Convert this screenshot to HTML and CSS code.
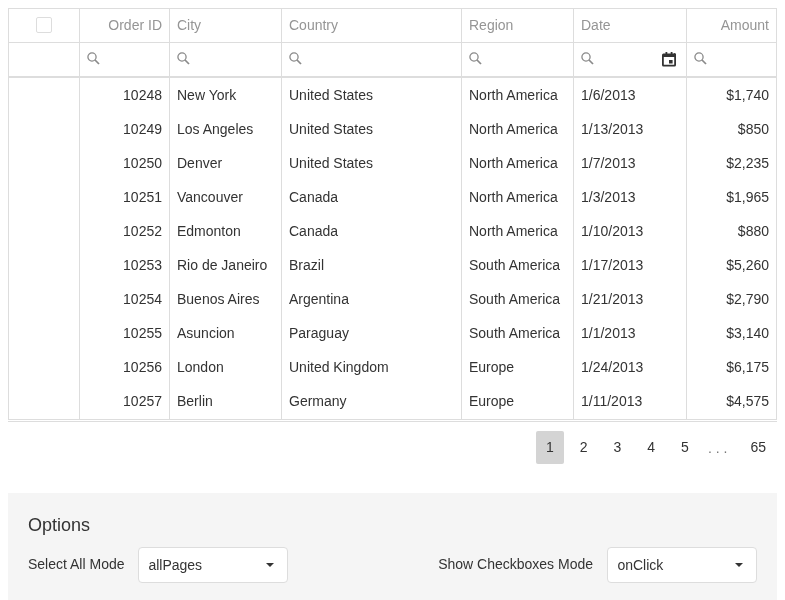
FILE: index.html
```html
<!DOCTYPE html>
<html lang="en">
<head>
  <meta charset="UTF-8" />
  <meta name="viewport" content="width=device-width, initial-scale=1.0"/>
  <title>Orders</title>
  <link rel="stylesheet" href="styles.css">
</head>
<body>

  <svg class="defs" width="0" height="0">
    <symbol id="search" viewBox="0 0 13 13">
      <circle cx="5" cy="5" r="4.100" fill="none" stroke="currentColor" stroke-width="1.300"/>
      <path d="M8 8l4 4" fill="none" stroke="currentColor" stroke-width="1.700"/>
    </symbol>
  </svg>

  <div class="grid">
    <table>
      <colgroup>
        <col class="c-check"><col class="c-id"><col class="c-city"><col class="c-country"><col class="c-region"><col class="c-date"><col class="c-amount">
      </colgroup>
      <thead>
        <tr class="head">
          <th class="check"><span class="checkbox"></span></th>
          <th class="num">Order ID</th>
          <th>City</th>
          <th>Country</th>
          <th>Region</th>
          <th>Date</th>
          <th class="num">Amount</th>
        </tr>
        <tr class="filter">
          <td></td>
          <td><svg class="search"><use href="#search"/></svg></td>
          <td><svg class="search"><use href="#search"/></svg></td>
          <td><svg class="search"><use href="#search"/></svg></td>
          <td><svg class="search"><use href="#search"/></svg></td>
          <td>
            <div class="date-filter">
              <svg class="search"><use href="#search"/></svg>
              <svg class="calendar" viewBox="0 0 18 18"><path d="M5.500 2h1.800v1.500h3.400V2h1.800v1.500h1A1.500 1.500 0 0 1 16 5v10a1.500 1.500 0 0 1-1.500 1.500h-11A1.500 1.500 0 0 1 2 15V5a1.500 1.500 0 0 1 1.500-1.500h2zM3.800 7v7.700h10.400V7zm5.200 3h3.600v3.400H9z" fill-rule="evenodd"/></svg>
            </div>
          </td>
          <td><svg class="search"><use href="#search"/></svg></td>
        </tr>
      </thead>
      <tbody>
        <tr><td></td><td class="num">10248</td><td>New York</td><td>United States</td><td>North America</td><td>1/6/2013</td><td class="num">$1,740</td></tr>
        <tr><td></td><td class="num">10249</td><td>Los Angeles</td><td>United States</td><td>North America</td><td>1/13/2013</td><td class="num">$850</td></tr>
        <tr><td></td><td class="num">10250</td><td>Denver</td><td>United States</td><td>North America</td><td>1/7/2013</td><td class="num">$2,235</td></tr>
        <tr><td></td><td class="num">10251</td><td>Vancouver</td><td>Canada</td><td>North America</td><td>1/3/2013</td><td class="num">$1,965</td></tr>
        <tr><td></td><td class="num">10252</td><td>Edmonton</td><td>Canada</td><td>North America</td><td>1/10/2013</td><td class="num">$880</td></tr>
        <tr><td></td><td class="num">10253</td><td>Rio de Janeiro</td><td>Brazil</td><td>South America</td><td>1/17/2013</td><td class="num">$5,260</td></tr>
        <tr><td></td><td class="num">10254</td><td>Buenos Aires</td><td>Argentina</td><td>South America</td><td>1/21/2013</td><td class="num">$2,790</td></tr>
        <tr><td></td><td class="num">10255</td><td>Asuncion</td><td>Paraguay</td><td>South America</td><td>1/1/2013</td><td class="num">$3,140</td></tr>
        <tr><td></td><td class="num">10256</td><td>London</td><td>United Kingdom</td><td>Europe</td><td>1/24/2013</td><td class="num">$6,175</td></tr>
        <tr><td></td><td class="num">10257</td><td>Berlin</td><td>Germany</td><td>Europe</td><td>1/11/2013</td><td class="num">$4,575</td></tr>
      </tbody>
    </table>
  </div>

  <div class="pager">
    <span class="page active">1</span>
    <span class="page">2</span>
    <span class="page">3</span>
    <span class="page">4</span>
    <span class="page">5</span>
    <span class="dots">. . .</span>
    <span class="page">65</span>
  </div>

  <div class="options">
    <div class="caption">Options</div>
    <div class="option-row">
      <div class="option">
        <span class="label first">Select All Mode</span>
        <div class="select"><span>allPages</span><i class="caret"></i></div>
      </div>
      <div class="option">
        <span class="label">Show Checkboxes Mode</span>
        <div class="select"><span>onClick</span><i class="caret"></i></div>
      </div>
    </div>
  </div>

</body>
</html>
```

FILE: styles.css
```css
body {
  margin: 8px 8px 0;
  background: #fff;
  color: #333;
  font-family: "Liberation Sans", Arial, sans-serif;
  font-size: 14px;
  will-change: transform;
}

.defs {
  display: block;
}

.grid {
  width: 769px;
  box-sizing: border-box;
  border: 1px solid #ddd;
  border-bottom: 0;
}

table {
  width: 767px;
  table-layout: fixed;
  border-collapse: separate;
  border-spacing: 0;
}

.c-check { width: 71px; }
.c-id { width: 90px; }
.c-city { width: 112px; }
.c-country { width: 180px; }
.c-region { width: 112px; }
.c-date { width: 113px; }
.c-amount { width: 89px; }

th, td {
  box-sizing: border-box;
  height: 34px;
  padding: 0 7px;
  border-right: 1px solid #ddd;
  text-align: left;
  font-weight: normal;
  white-space: nowrap;
}

th:last-child, td:last-child {
  border-right: 0;
}

.num {
  text-align: right;
}

.head th {
  padding-bottom: 1px;
  color: #959595;
  border-bottom: 1px solid #ddd;
}

.filter td {
  height: 35px;
  padding: 0 6px 3px 7px;
  border-bottom: 2px solid #ddd;
}

tbody tr:last-child td {
  height: 36px;
  padding-bottom: 2px;
  border-bottom: 1px solid #ddd;
}

.checkbox {
  display: block;
  box-sizing: border-box;
  width: 16px;
  height: 16px;
  margin: 0 auto;
  background: #fff;
  border: 1px solid #ddd;
  border-radius: 2px;
}

.search {
  display: block;
  width: 13px;
  height: 13px;
  color: #8a8a8a;
}

.date-filter {
  display: flex;
  justify-content: space-between;
  align-items: center;
  height: 13px;
}

.calendar {
  display: block;
  flex: none;
  width: 18px;
  height: 18px;
  margin: 1px 2px 0 0;
  fill: #333;
}

.pager {
  display: flex;
  justify-content: flex-end;
  align-items: center;
  width: 766px;
  height: 33px;
  margin-top: 1px;
  padding: 9px 3px 0 0;
  border-top: 1px solid #ddd;
  color: #333;
}

.page {
  box-sizing: border-box;
  min-width: 28px;
  height: 33px;
  margin-left: 5.750px;
  padding: 0 8px;
  line-height: 33px;
  text-align: center;
  border-radius: 2px;
}

.page.active {
  background: #d4d4d4;
}

.dots {
  margin: 0 9.300px 0 9px;
  color: #777;
}

.options {
  width: 769px;
  box-sizing: border-box;
  margin-top: 29px;
  padding: 20px 20px 17px;
  background: #f5f5f5;
}

.caption {
  height: 24px;
  margin-bottom: 10px;
  font-size: 18px;
  line-height: 24px;
}

.option-row {
  display: flex;
  justify-content: space-between;
}

.option {
  display: flex;
  align-items: center;
}

.label {
  margin-right: 14px;
  position: relative;
  top: -1px;
}

.label.first {
  margin-right: 13.500px;
}

.select {
  display: flex;
  justify-content: space-between;
  align-items: center;
  box-sizing: border-box;
  width: 150px;
  height: 36px;
  padding: 0 10px 0 9.400px;
  background: #fff;
  border: 1px solid #ddd;
  border-radius: 4px;
}

.caret {
  display: block;
  margin-right: 3px;
  border-top: 4px solid #333;
  border-left: 4px solid transparent;
  border-right: 4px solid transparent;
}
```
